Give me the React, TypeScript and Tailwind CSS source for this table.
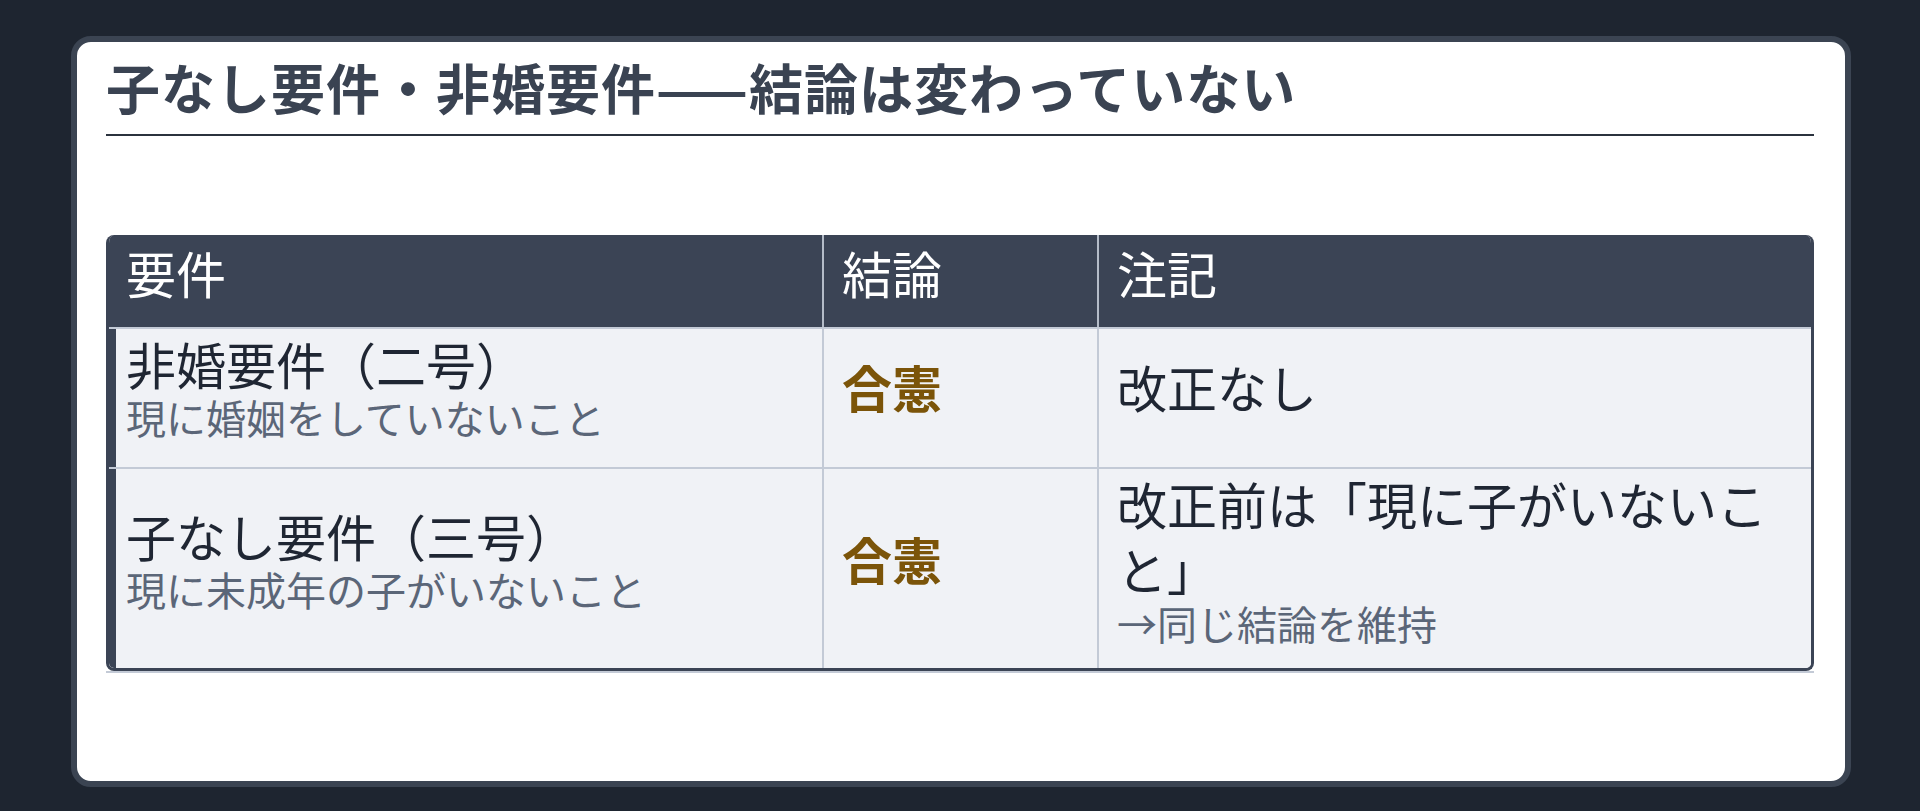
const rows = [
  {
    req: "非婚要件（二号）",
    sub: "現に婚姻をしていないこと",
    result: "合憲",
    note: "改正なし",
    noteSub: "",
    height: "h-[140px]",
    pad: "pb-[26px]",
  },
  {
    req: "子なし要件（三号）",
    sub: "現に未成年の子がいないこと",
    result: "合憲",
    note: "改正前は「現に子がいないこと」",
    noteSub: "→同じ結論を維持",
    height: "h-[201px]",
    pad: "pb-[24px]",
  },
];

export default function App() {
  return (
    <div
      className="min-h-[811px] bg-[#1e2530] pt-[36px]"
      style={{ fontFamily: '"Noto Sans CJK JP", "Noto Sans", sans-serif' }}
    >
      <div className="ml-[71px] w-[1780px] h-[751px] rounded-[20px] border-[6px] border-[#3b4452] bg-white pl-[29px] pr-[31px] pt-[12px]">
        <h1 className="text-[54px] leading-[65px] font-bold tracking-[1px] text-[#3a4352] pb-[15px] border-b-2 border-[#2b323e]">
          子なし要件・非婚要件——結論は変わっていない
        </h1>

        <div className="mt-[99px] w-[1708px] rounded-[8px] overflow-hidden border-x-[3px] border-b-[3px] border-[#3b4455]">
          <div className="grid grid-cols-[713px_275px_714px] h-[92px] bg-[#3b4455] text-white text-[50px] leading-[65px]">
            <div className="pl-[17px] pt-[5px]">要件</div>
            <div className="border-l-2 border-[#b4bcc8] pl-[18px] pt-[5px]">結論</div>
            <div className="border-l-2 border-[#b4bcc8] pl-[18px] pt-[5px]">注記</div>
          </div>

          {rows.map((r) => (
            <div
              key={r.req}
              className={`grid grid-cols-[713px_275px_714px] ${r.height} border-t-2 border-[#c3cad6] bg-[#f0f2f6]`}
            >
              <div className={`flex flex-col justify-center border-l-[7px] border-l-[#3b4455] pl-[10px] pt-[2px] ${r.pad}`}>
                <div className="text-[50px] leading-[62px] text-[#1f2633]">{r.req}</div>
                <div className="text-[40px] leading-[47px] text-[#5b6678]">{r.sub}</div>
              </div>
              <div className={`flex flex-col justify-center border-l-2 border-[#c3cad6] pl-[18px] pt-[2px] ${r.pad}`}>
                <div className="text-[50px] leading-[65px] font-bold text-[#7b5409]">{r.result}</div>
              </div>
              <div className={`flex flex-col justify-center border-l-2 border-[#c3cad6] pl-[18px] pr-[18px] pt-[2px] ${r.pad}`}>
                <div className="text-[50px] leading-[65px] text-[#1f2633]">{r.note}</div>
                {r.noteSub && (
                  <div className="text-[40px] leading-[44px] text-[#5b6678]">{r.noteSub}</div>
                )}
              </div>
            </div>
          ))}
        </div>
        <div className="h-[2px] w-[1708px] bg-[#c3cad6]" />
      </div>
    </div>
  );
}
